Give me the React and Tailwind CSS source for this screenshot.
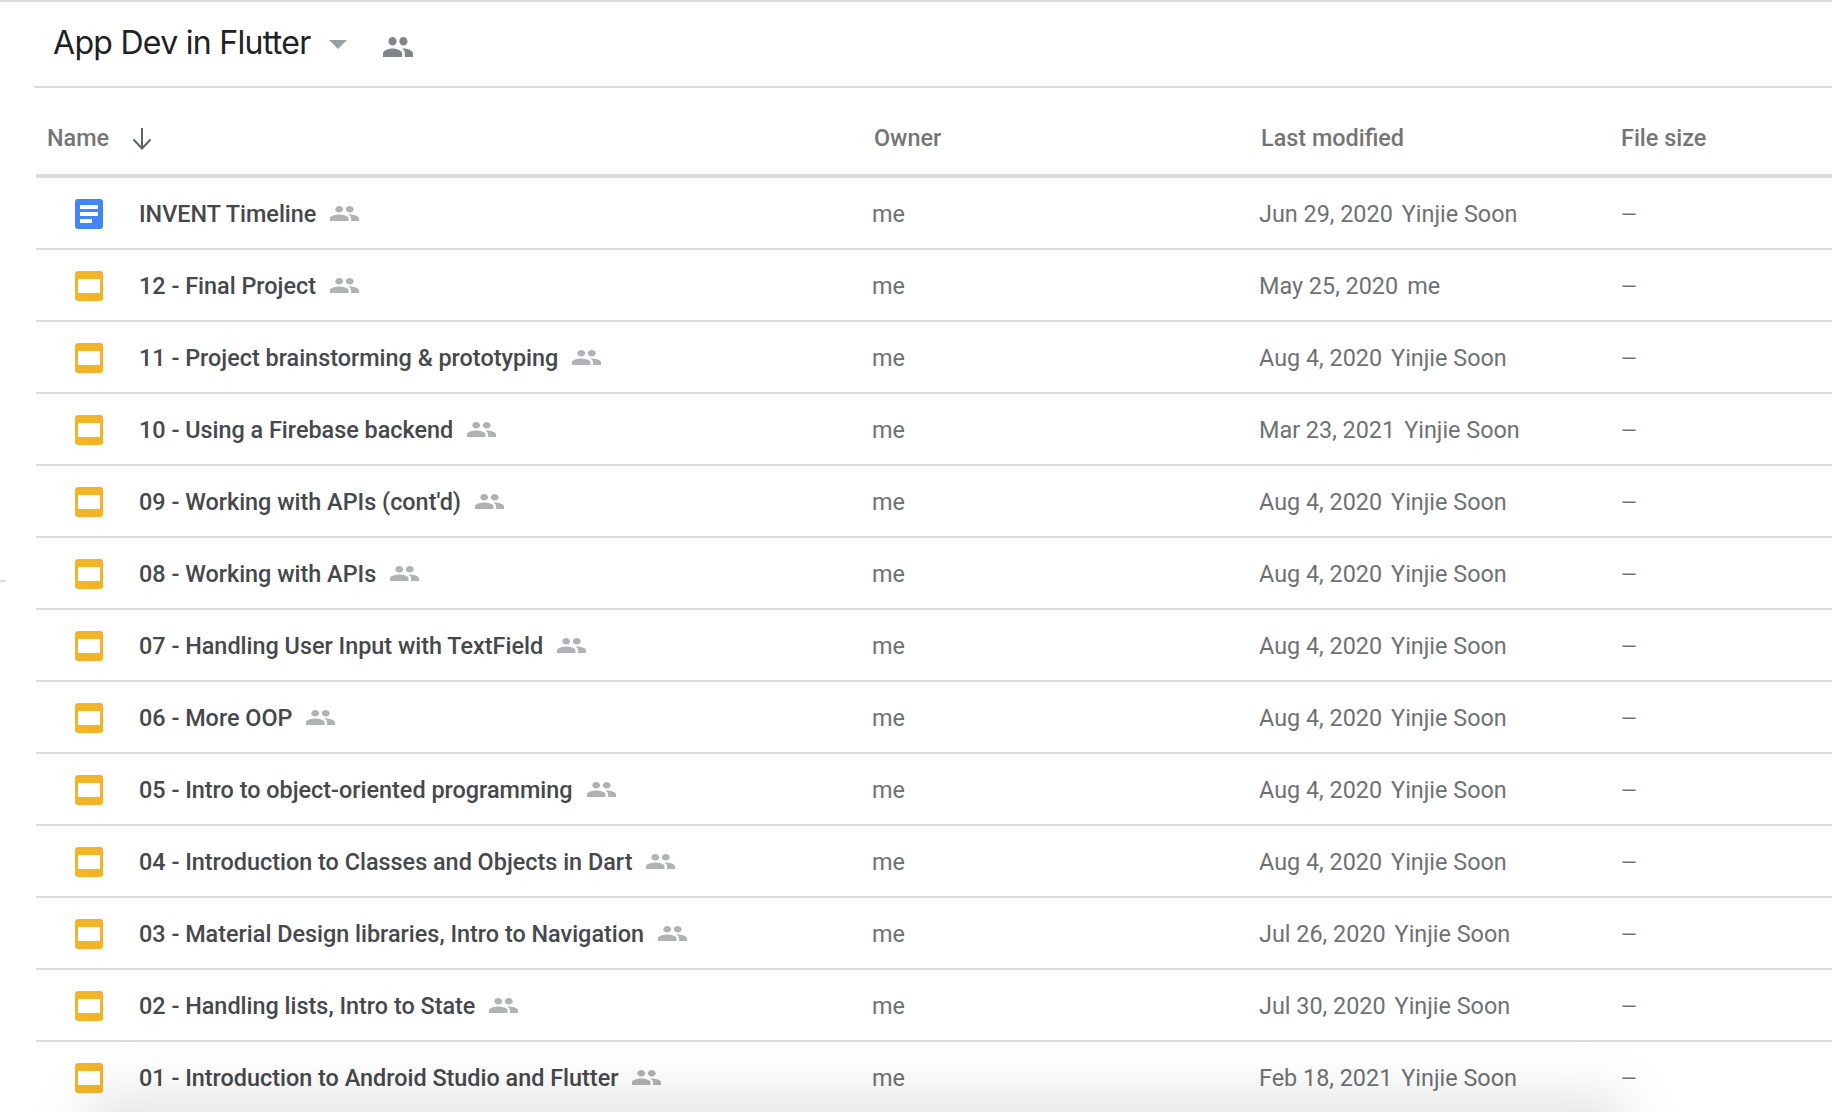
import React from 'react';

const files = [
  { name: 'INVENT Timeline', type: 'doc', date: 'Jun 29, 2020', by: 'Yinjie Soon' },
  { name: '12 - Final Project', date: 'May 25, 2020', by: 'me' },
  { name: '11 - Project brainstorming & prototyping', date: 'Aug 4, 2020', by: 'Yinjie Soon' },
  { name: '10 - Using a Firebase backend', date: 'Mar 23, 2021', by: 'Yinjie Soon' },
  { name: "09 - Working with APIs (cont'd)", date: 'Aug 4, 2020', by: 'Yinjie Soon' },
  { name: '08 - Working with APIs', date: 'Aug 4, 2020', by: 'Yinjie Soon' },
  { name: '07 - Handling User Input with TextField', date: 'Aug 4, 2020', by: 'Yinjie Soon' },
  { name: '06 - More OOP', date: 'Aug 4, 2020', by: 'Yinjie Soon' },
  { name: '05 - Intro to object-oriented programming', date: 'Aug 4, 2020', by: 'Yinjie Soon' },
  { name: '04 - Introduction to Classes and Objects in Dart', date: 'Aug 4, 2020', by: 'Yinjie Soon' },
  { name: '03 - Material Design libraries, Intro to Navigation', date: 'Jul 26, 2020', by: 'Yinjie Soon' },
  { name: '02 - Handling lists, Intro to State', date: 'Jul 30, 2020', by: 'Yinjie Soon' },
  { name: '01 - Introduction to Android Studio and Flutter', date: 'Feb 18, 2021', by: 'Yinjie Soon' },
];

const People = ({ className }) => (
  <svg viewBox="1 5 22 14" preserveAspectRatio="none" fill="currentColor" className={className}>
    <path d="M16 11c1.66 0 2.99-1.34 2.99-3S17.66 5 16 5c-1.66 0-3 1.34-3 3s1.34 3 3 3zm-8 0c1.66 0 2.99-1.34 2.99-3S9.66 5 8 5C6.34 5 5 6.34 5 8s1.34 3 3 3zm0 2c-2.33 0-7 1.17-7 3.5V19h14v-2.5c0-2.33-4.67-3.5-7-3.5zm8 0c-.29 0-.62.02-.97.05 1.16.84 1.97 1.97 1.97 3.45V19h6v-2.5c0-2.33-4.67-3.5-7-3.5z" />
  </svg>
);

const DocIcon = () => (
  <svg viewBox="0 0 28 30" className="w-[28px] h-[30px] shrink-0 mb-[2px]">
    <rect width="28" height="30" rx="3" fill="#4285f4" />
    <rect x="5" y="6" width="18" height="4" fill="#fff" />
    <rect x="5" y="13" width="18" height="4" fill="#fff" />
    <rect x="5" y="20" width="12" height="4" fill="#fff" />
  </svg>
);

const SlidesIcon = () => (
  <svg viewBox="0 0 28 30" className="w-[28px] h-[30px] shrink-0 mb-[2px]">
    <rect width="28" height="30" rx="3" fill="#f4b42a" />
    <rect x="3" y="8" width="22" height="14" fill="#fff" />
  </svg>
);

const App = () => {
  return (
    <div className="relative h-[1112px] overflow-hidden bg-white font-['Roboto',sans-serif] border-t-2 border-[#dadce0]">
      {/* Title bar */}
      <div className="ml-[34px] h-[86px] border-b-2 border-[#dadce0] flex items-center pl-[19px] pb-[2px]">
        <span className="text-[32px] text-[#202124] font-['Inter',sans-serif] tracking-[-0.7px]">App Dev in Flutter</span>
        <svg viewBox="0 0 18 9" className="w-[18px] h-[9px] ml-[18px] mt-[3px]">
          <path d="M0 0h18L9 9z" fill="#9aa0a6" />
        </svg>
        <People className="w-[30px] h-[20px] ml-[36px] mt-[8px] text-[#80868b]" />
      </div>

      {/* Column headers */}
      <div className="ml-[36px] h-[90px] pt-[16px] border-b-4 border-[#dadce0] grid grid-cols-[835px_388px_362px_1fr] items-center text-[23.4px] font-medium text-[#757575]">
        <div className="flex items-center pl-[11px]">
          <span>Name</span>
          <svg viewBox="0 0 20 22" fill="none" stroke="#5f6368" strokeWidth="2" className="w-[20px] h-[22px] ml-[23px]">
            <path d="M10 0v20M1.500 11.500 10 20.500l8.500-9" />
          </svg>
        </div>
        <span className="pl-[3px]">Owner</span>
        <span className="pl-[2px]">Last modified</span>
        <span>File size</span>
      </div>

      {/* File rows */}
      {files.map((file) => (
        <div key={file.name} className="ml-[36px] h-[72px] pt-[4px] border-b-2 border-[#dadce0] grid grid-cols-[835px_388px_362px_1fr] items-center text-[23.4px] text-[#6e7175]">
          <div className="flex items-center pl-[39px]">
            {file.type === 'doc' ? <DocIcon /> : <SlidesIcon />}
            <span className="ml-[36px] font-medium text-[#45484c]">{file.name}</span>
            <People className="w-[29px] h-[15px] ml-[14px] mb-[2px] text-[#b0b2b5]" />
          </div>
          <span className="pl-[1px]">me</span>
          <div className="flex gap-[9px]">
            <span>{file.date}</span>
            <span>{file.by}</span>
          </div>
          <span className="text-[20px]">—</span>
        </div>
      ))}

      {/* Shadow rising from the bottom edge */}
      <div className="absolute left-[110px] right-[230px] top-[1120px] h-[40px] shadow-[0_0_60px_24px_rgba(0,0,0,0.12)]" />
      {/* Stray tick on the left edge */}
      <div className="absolute left-0 top-[578px] w-[6px] h-[2px] bg-[#dadce0]" />
    </div>
  );
};

export default App;
